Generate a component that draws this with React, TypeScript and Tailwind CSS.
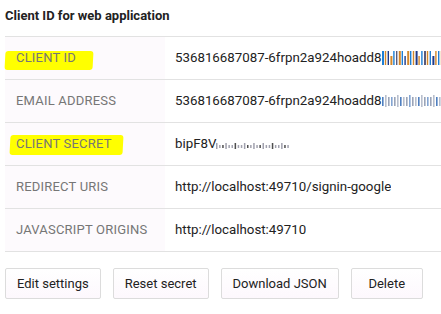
import React from 'react';

const rows = [
  { label: 'CLIENT ID', value: '536816687087-6frpn2a924hoadd8', mark: 'id' },
  { label: 'EMAIL ADDRESS', value: '536816687087-6frpn2a924hoadd8', mark: 'email' },
  { label: 'CLIENT SECRET', value: 'bipF8V', mark: 'secret' },
  { label: 'REDIRECT URIS', value: 'http://localhost:49710/signin-google', mark: '' },
  { label: 'JAVASCRIPT ORIGINS', value: 'http://localhost:49710', mark: '' },
];

// scrambled (redacted) tail after the visible part of a value
function Scramble({ kind }: { kind: string }) {
  if (kind === 'id') {
    const cols = ['#1e7fd6', '#d4882a', '#1e3a8a', '#d4882a', '#1e7fd6', '#5a5a7a', '#d4882a', '#1e7fd6', '#1e3a8a', '#d4882a'];
    return (
      <svg width="62" height="16" className="shrink-0">
        {Array.from({ length: 22 }).map((_, i) => (
          <rect key={i} x={i * 2.8} y={i % 5 === 3 ? 6 : 1} width={i % 3 === 0 ? 2 : 1.4} height={i % 5 === 3 ? 9 : 14} fill={cols[i % cols.length]} />
        ))}
      </svg>
    );
  }
  if (kind === 'email') {
    return (
      <svg width="62" height="16" className="shrink-0">
        {Array.from({ length: 20 }).map((_, i) => (
          <rect key={i} x={i * 3} y={i % 4 === 1 ? 2 : 4} width="1.6" height={i % 4 === 1 ? 12 : 9} fill={i % 3 === 0 ? '#4f7fbf' : '#9aa4b8'} opacity={i % 2 ? 0.7 : 1} />
        ))}
      </svg>
    );
  }
  if (kind === 'secret') {
    return (
      <svg width="76" height="16" className="shrink-0">
        {Array.from({ length: 24 }).map((_, i) => (
          <rect key={i} x={i * 3.1} y={i % 3 === 0 ? 7 : 9} width="1.5" height={i % 3 === 0 ? 6 : 3} fill={i % 4 === 2 ? '#222' : '#8a8a9a'} opacity={0.8} />
        ))}
      </svg>
    );
  }
  return null;
}

export default function App() {
  return (
    <div className="w-[441px] h-[314px] bg-white overflow-hidden font-['Roboto',_'Liberation_Sans',_sans-serif]">
      <h2 className="pl-[5px] pt-[6px] h-[36px] text-[13px] font-bold text-[#222]">Client ID for web application</h2>
      <div className="ml-[5px] border-t border-[#e2e2e2]">
        {rows.map((r) => (
          <div key={r.label} className="flex h-[43px] border-b border-[#e2e2e2]">
            <div className="relative w-[160px] shrink-0 bg-[#fdfafd] flex items-center pl-[11px]">
              {r.mark === 'id' && (
                <span className="absolute left-0 top-[14px] w-[88px] h-[19px] bg-[#ffff00] rounded-[3px] -skew-x-3" />
              )}
              {r.mark === 'secret' && (
                <span className="absolute left-[5px] top-[12px] w-[113px] h-[20px] bg-[#ffff00] rounded-[3px] -skew-x-3" />
              )}
              <span className="relative text-[13px] tracking-[0.2px] text-[#767676]">{r.label}</span>
            </div>
            <div className="flex items-center pl-[10px] text-[13.3px] text-[#222] whitespace-nowrap overflow-hidden">
              <span>{r.value}</span>
              <Scramble kind={r.mark} />
            </div>
          </div>
        ))}
      </div>
      <div className="flex gap-[12px] pl-[5px] pt-[16px]">
        {['Edit settings', 'Reset secret', 'Download JSON', 'Delete'].map((b) => (
          <button
            key={b}
            className="shrink-0 whitespace-nowrap h-[31px] min-w-[72px] px-[11px] border border-[#dcdcdc] rounded-[2px] bg-gradient-to-b from-white to-[#fdf8fd] text-[13px] text-[#222]"
          >
            {b}
          </button>
        ))}
      </div>
    </div>
  );
}
